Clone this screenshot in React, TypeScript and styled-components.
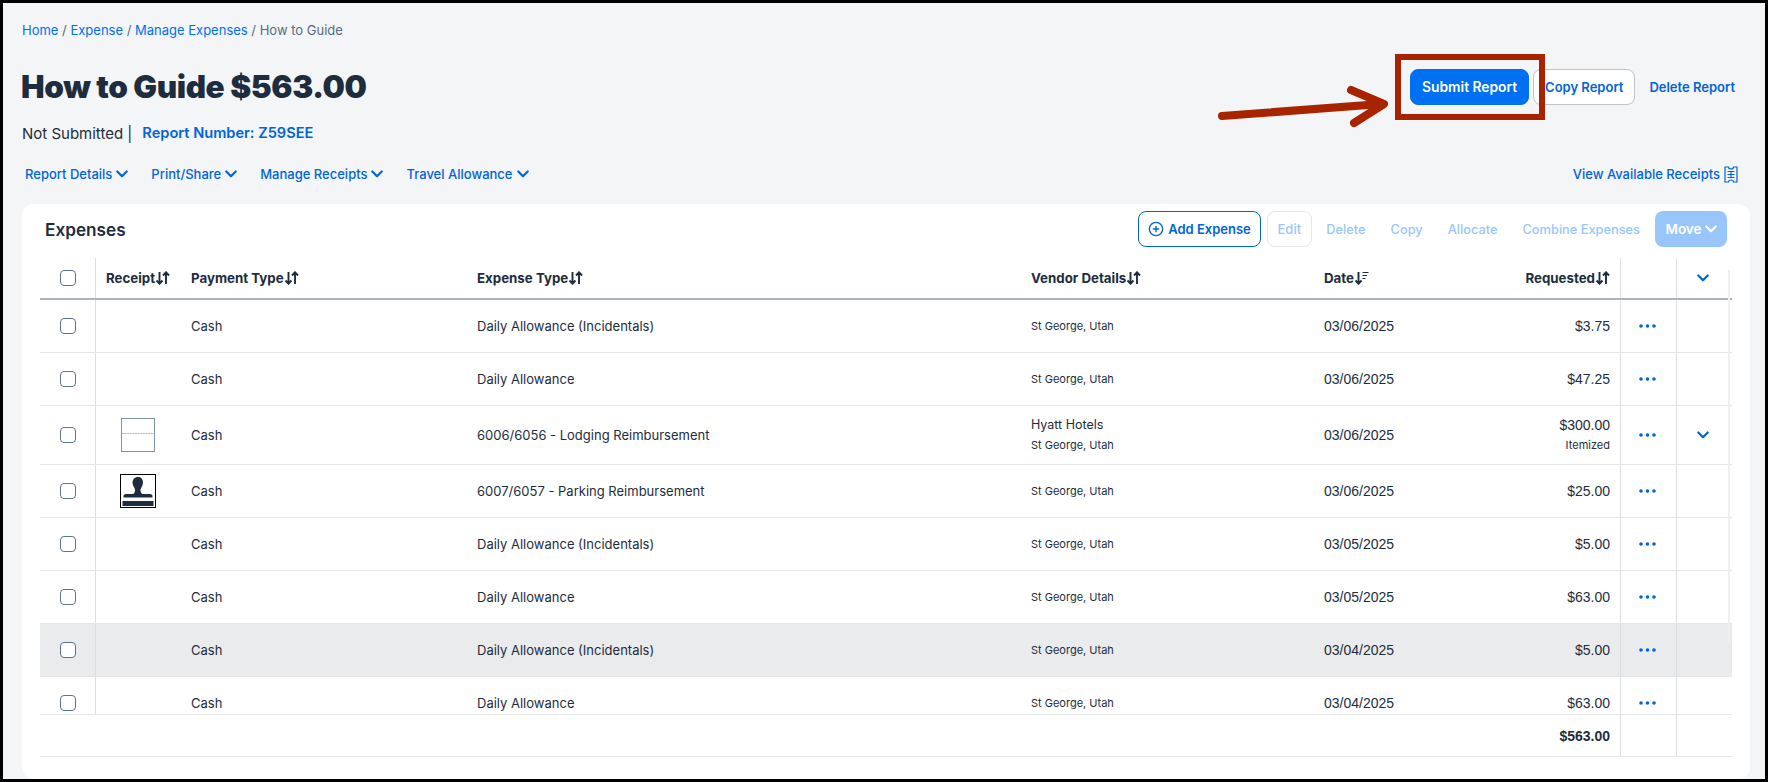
import React from 'react';
import styled, { createGlobalStyle } from 'styled-components';
import { CirclePlus } from 'lucide-react';

const GlobalStyle = createGlobalStyle`
  html, body {
    margin: 0;
    padding: 0;
    background: #000;
  }
  * {
    box-sizing: border-box;
  }
`;

const Page = styled.div`
  position: relative;
  width: 1768px;
  height: 782px;
  border: 3px solid #000;
  background: #f4f5f7;
  padding: 17px 15px 0 19px;
  font-family: Inter, 'Liberation Sans', sans-serif;
  font-size: 13px;
  color: #1d2d3e;
  overflow: hidden;
  display: flex;
  flex-direction: column;
`;

const Breadcrumb = styled.div`
  height: 20px;
  line-height: 20px;
  font-size: 13px;
  color: #556b82;
`;

const Crumb = styled.a`
  color: #0070f2;
  text-decoration: none;
`;

const HeaderRow = styled.div`
  display: flex;
  align-items: center;
  justify-content: space-between;
  height: 36px;
  margin-top: 29px;
`;

const Title = styled.h1`
  margin: -1px 0 0 -1px;
  font-size: 31.5px;
  font-weight: 900;
  line-height: 36px;
  letter-spacing: -0.4px;
  color: #1d2d3e;
`;

const Actions = styled.div`
  display: flex;
  align-items: center;
  gap: 4px;
`;

const Highlight = styled.span`
  position: relative;
  display: inline-flex;
  &::after {
    content: '';
    position: absolute;
    inset: -15px -16px -15px -15px;
    border: 6px solid #a82400;
    pointer-events: none;
  }
`;

const Button = styled.button<{ $kind: 'primary' | 'outline' | 'ghost' }>`
  height: 36px;
  padding: 0 11px;
  border-radius: 8px;
  font-family: inherit;
  font-size: ${(p) => (p.$kind === 'primary' ? 13.8 : 13)}px;
  font-weight: 600;
  white-space: nowrap;
  background: ${(p) => (p.$kind === 'primary' ? '#0070f2' : p.$kind === 'outline' ? '#fff' : 'transparent')};
  color: ${(p) => (p.$kind === 'primary' ? '#fff' : '#0064d9')};
  border: 1px solid ${(p) => (p.$kind === 'primary' ? '#0070f2' : p.$kind === 'outline' ? '#bcc3ca' : 'transparent')};
`;

const DeleteReport = styled(Button)`
  margin-left: -5px;
  padding: 0 14px;
`;

const Arrow = styled.svg`
  position: absolute;
  left: 1210px;
  top: 80px;
  width: 180px;
  height: 50px;
`;

const StatusRow = styled.div`
  display: flex;
  align-items: center;
  height: 20px;
  margin-top: 18px;
  font-size: 15px;
  color: #1d2d3e;
`;

const ReportNumber = styled.span`
  margin-left: 10px;
  font-size: 14.6px;
  font-weight: 600;
  color: #0064d9;
`;

const MenuRow = styled.div`
  display: flex;
  align-items: center;
  justify-content: space-between;
  height: 20px;
  margin: 21px 0 20px;
  padding: 0 12px 0 3px;
`;

const Menus = styled.div`
  display: flex;
  gap: 23px;
`;

const MenuLink = styled.a`
  display: inline-flex;
  align-items: center;
  gap: 4px;
  font-size: 13px;
  font-weight: 500;
  color: #0064d9;
`;

const Card = styled.section`
  position: relative;
  flex: 1;
  background: #fff;
  border-radius: 12px;
  padding: 7px 18px 0;
`;

const Toolbar = styled.div`
  display: flex;
  align-items: center;
  height: 36px;
  padding: 0 5px;
`;

const CardTitle = styled.h2`
  margin: 0 auto 0 0;
  font-size: 17.2px;
  font-weight: 600;
  color: #1d2d3e;
`;

const AddButton = styled.button`
  display: inline-flex;
  align-items: center;
  gap: 4px;
  height: 36px;
  padding: 0 9px;
  background: #fff;
  border: 1px solid #0064d9;
  border-radius: 8px;
  color: #0064d9;
  font-family: inherit;
  font-size: 13px;
  font-weight: 600;
`;

const EditButton = styled.button`
  height: 36px;
  width: 45px;
  margin: 0 2px 0 6px;
  background: #fff;
  border: 1px solid #e4e6e8;
  border-radius: 8px;
  color: #99c6fa;
  font-family: inherit;
  font-size: 13px;
  font-weight: 500;
`;

const GhostButton = styled.button`
  height: 36px;
  padding: 0 12.5px;
  background: transparent;
  border: 0;
  color: #99c6fa;
  font-family: inherit;
  font-size: 12.8px;
  font-weight: 500;
  white-space: nowrap;
`;

const MoveButton = styled.button`
  display: inline-flex;
  align-items: center;
  justify-content: center;
  gap: 3px;
  width: 72px;
  height: 36px;
  margin-left: 2.5px;
  background: #99c6fa;
  border: 0;
  border-radius: 8px;
  color: #fff;
  font-family: inherit;
  font-size: 13.5px;
  font-weight: 600;
`;

const Table = styled.div`
  position: relative;
  margin-top: 11px;
`;

const columns = '55px 85px 286px 554px 293px 127px 180px 56px 56px';

const HeadRow = styled.div`
  display: grid;
  grid-template-columns: ${columns};
  height: 42px;
  border-bottom: 2px solid #a9b4be;
`;

const Scroller = styled.div`
  height: 414px;
  overflow: hidden;
`;

const Row = styled.div<{ $tall?: boolean; $hover?: boolean }>`
  display: grid;
  grid-template-columns: ${columns};
  height: ${(p) => (p.$tall ? 59 : 53)}px;
  border-bottom: 1px solid #e4e6e8;
  background: ${(p) => (p.$hover ? '#eaebed' : '#fff')};
`;

const Foot = styled.div`
  display: grid;
  grid-template-columns: ${columns};
  height: 43px;
  border-top: 1px solid #e4e6e8;
  border-bottom: 1px solid #e4e6e8;
`;

const Cell = styled.div<{ $line?: boolean; $right?: boolean; $center?: boolean }>`
  display: flex;
  flex-direction: column;
  justify-content: center;
  align-items: ${(p) => (p.$right ? 'flex-end' : p.$center ? 'center' : 'flex-start')};
  padding: 0 ${(p) => (p.$center ? 13 : p.$right ? 10 : 11)}px 0 ${(p) => (p.$center || p.$line ? 10 : 11)}px;
  min-width: 0;
  border-left: ${(p) => (p.$line ? '1px solid #dcdfe2' : '0')};
  white-space: nowrap;
`;

const HeadCell = styled(Cell)`
  flex-direction: row;
  align-items: center;
  justify-content: ${(p) => (p.$right ? 'flex-end' : p.$center ? 'center' : 'flex-start')};
  font-size: 13.3px;
  font-weight: 700;
  svg {
    flex-shrink: 0;
  }
`;

const Box = styled.span`
  display: block;
  width: 16px;
  height: 16px;
  margin-left: 9px;
  background: #fff;
  border: 1px solid #5b738b;
  border-radius: 4px;
`;

const Small = styled.span`
  font-size: 11px;
  line-height: 20px;
`;

const Vendor = styled.span`
  font-size: 12.5px;
  line-height: 20px;
`;

const Figure = styled.span`
  font-family: 'Liberation Sans', Arial, sans-serif;
  font-size: 14px;
  line-height: 20px;
`;

const Total = styled(Figure)`
  font-weight: 700;
`;

const Thumb = styled.span`
  display: flex;
  align-self: center;
`;

const ScrollTrack = styled.div`
  position: absolute;
  top: 12px;
  left: 1688px;
  width: 2px;
  height: 373px;
  background: #eeeff0;
`;

const Blue = '#0064d9';

const Chevron = () => (
  <svg width="12" height="8" viewBox="0 0 12 8" fill="none" stroke="currentColor" strokeWidth="2.2" strokeLinecap="round" strokeLinejoin="round">
    <path d="M1.3 1.500L6 6.200l4.700-4.700" />
  </svg>
);

const BlueChevron = styled.span`
  display: flex;
  color: ${Blue};
`;

const SortIcon = () => (
  <svg width="15" height="14" viewBox="0 0 15 14" fill="none" stroke="currentColor" strokeWidth="1.9">
    <path d="M4.500 1v11.500M1.500 9.500l3 3.200 3-3.200" />
    <path d="M11 13V1.500M8 4.500l3-3.200 3 3.200" />
  </svg>
);

const DateSortIcon = () => (
  <svg width="15" height="14" viewBox="0 0 15 14" fill="none" stroke="currentColor" strokeWidth="1.900">
    <path d="M4.500 1v11.500M1.500 9.500l3 3.200 3-3.200" />
    <path d="M8.500 1.500h6M8.500 4.500h4.500M8.500 7.500h3" strokeWidth="1.200" />
  </svg>
);

const Dots = () => (
  <svg width="17" height="4" viewBox="0 0 17 4" fill="#0064d9">
    <circle cx="2" cy="2" r="1.800" />
    <circle cx="8.500" cy="2" r="1.800" />
    <circle cx="15" cy="2" r="1.800" />
  </svg>
);

const ReceiptsIcon = () => (
  <svg width="14" height="17" viewBox="0 0 14 17" fill="none" stroke={Blue} strokeWidth="1.200">
    <path d="M1 1h3.500a2.500 2 0 0 0 5 0H13v15H9.500a2.500 2 0 0 0-5 0H1z" />
    <path d="M3.500 5.500h7M3.500 8.500h7M3.500 11.500h7M7 5v7" />
  </svg>
);

const PaperThumb = () => (
  <svg width="34" height="34" viewBox="0 0 34 34">
    <rect x="0.500" y="0.500" width="33" height="33" fill="#fff" stroke="#7d94a8" />
    <path d="M1 15.500h32" stroke="#b9b9b9" strokeWidth="1" strokeDasharray="2 0.600" />
  </svg>
);

const StampThumb = () => (
  <svg width="36" height="34" viewBox="0 0 36 34">
    <rect x="0.500" y="0.500" width="35" height="33" fill="#fff" stroke="#000" />
    <path
      d="M18 3c3.500 0 5 2.500 5 5.500 0 3-2 5-2.500 7-.3 1.600.4 3.600 2 4.500H30c1.700 0 2.500 1 2.500 2v1.500h-29V22c0-1 .8-2 2.500-2h7c1.600-.9 2.300-2.900 2-4.500-.5-2-2.500-4-2.500-7C12.500 5.500 14.500 3 18 3z"
      fill="#1d2d3e"
    />
    <rect x="2.500" y="27" width="31" height="5" fill="#1d2d3e" />
  </svg>
);

type Expense = {
  type: string;
  vendor?: string;
  date: string;
  amount: string;
  receipt?: 'paper' | 'stamp';
  itemized?: boolean;
  hover?: boolean;
};

const expenses: Expense[] = [
  { type: 'Daily Allowance (Incidentals)', date: '03/06/2025', amount: '$3.75' },
  { type: 'Daily Allowance', date: '03/06/2025', amount: '$47.25' },
  { type: '6006/6056 - Lodging Reimbursement', vendor: 'Hyatt Hotels', date: '03/06/2025', amount: '$300.00', receipt: 'paper', itemized: true },
  { type: '6007/6057 - Parking Reimbursement', date: '03/06/2025', amount: '$25.00', receipt: 'stamp' },
  { type: 'Daily Allowance (Incidentals)', date: '03/05/2025', amount: '$5.00' },
  { type: 'Daily Allowance', date: '03/05/2025', amount: '$63.00' },
  { type: 'Daily Allowance (Incidentals)', date: '03/04/2025', amount: '$5.00', hover: true },
  { type: 'Daily Allowance', date: '03/04/2025', amount: '$63.00' },
];

const App = () => (
  <>
    <GlobalStyle />
    <Page>
      <Breadcrumb>
        <Crumb>Home</Crumb> / <Crumb>Expense</Crumb> / <Crumb>Manage Expenses</Crumb> / How to Guide
      </Breadcrumb>

      <HeaderRow>
        <Title>How to Guide $563.00</Title>
        <Actions>
          <Highlight>
            <Button $kind="primary">Submit Report</Button>
          </Highlight>
          <Button $kind="outline">Copy Report</Button>
          <DeleteReport $kind="ghost">Delete Report</DeleteReport>
        </Actions>
      </HeaderRow>

      <Arrow viewBox="0 0 180 50" fill="none" stroke="#a82400" strokeWidth="8" strokeLinecap="round" strokeLinejoin="round">
        <path d="M9 33L168 21" />
        <path d="M138 7L171 21 141 40" />
      </Arrow>

      <StatusRow>
        Not Submitted |<ReportNumber>Report Number: Z59SEE</ReportNumber>
      </StatusRow>

      <MenuRow>
        <Menus>
          {['Report Details', 'Print/Share', 'Manage Receipts', 'Travel Allowance'].map((label) => (
            <MenuLink key={label}>
              {label}
              <Chevron />
            </MenuLink>
          ))}
        </Menus>
        <MenuLink>
          View Available Receipts
          <ReceiptsIcon />
        </MenuLink>
      </MenuRow>

      <Card>
        <Toolbar>
          <CardTitle>Expenses</CardTitle>
          <AddButton>
            <CirclePlus size={16} strokeWidth={2} />
            Add Expense
          </AddButton>
          <EditButton>Edit</EditButton>
          <GhostButton>Delete</GhostButton>
          <GhostButton>Copy</GhostButton>
          <GhostButton>Allocate</GhostButton>
          <GhostButton>Combine Expenses</GhostButton>
          <MoveButton>
            Move
            <Chevron />
          </MoveButton>
        </Toolbar>

        <Table>
          <HeadRow>
            <HeadCell><Box /></HeadCell>
            <HeadCell $line>Receipt<SortIcon /></HeadCell>
            <HeadCell>Payment Type<SortIcon /></HeadCell>
            <HeadCell>Expense Type<SortIcon /></HeadCell>
            <HeadCell>Vendor Details<SortIcon /></HeadCell>
            <HeadCell>Date<DateSortIcon /></HeadCell>
            <HeadCell $right>Requested<SortIcon /></HeadCell>
            <HeadCell $line />
            <HeadCell $line $center><BlueChevron><Chevron /></BlueChevron></HeadCell>
          </HeadRow>

          <Scroller>
            {expenses.map((e, i) => (
              <Row key={i} $tall={e.receipt === 'paper'} $hover={e.hover}>
                <Cell><Box /></Cell>
                <Cell $line>
                  {e.receipt === 'paper' && <Thumb><PaperThumb /></Thumb>}
                  {e.receipt === 'stamp' && <Thumb><StampThumb /></Thumb>}
                </Cell>
                <Cell>Cash</Cell>
                <Cell>{e.type}</Cell>
                <Cell>
                  {e.vendor && <Vendor>{e.vendor}</Vendor>}
                  <Small>St George, Utah</Small>
                </Cell>
                <Cell><Figure>{e.date}</Figure></Cell>
                <Cell $right>
                  <Figure>{e.amount}</Figure>
                  {e.itemized && <Small>Itemized</Small>}
                </Cell>
                <Cell $line $center><Dots /></Cell>
                <Cell $line $center>
                  {e.itemized && <BlueChevron><Chevron /></BlueChevron>}
                </Cell>
              </Row>
            ))}
          </Scroller>

          <Foot>
            <Cell />
            <Cell />
            <Cell />
            <Cell />
            <Cell />
            <Cell />
            <Cell $right><Total>$563.00</Total></Cell>
            <Cell $line />
            <Cell $line />
          </Foot>

          <ScrollTrack />
        </Table>
      </Card>
    </Page>
  </>
);

export default App;
